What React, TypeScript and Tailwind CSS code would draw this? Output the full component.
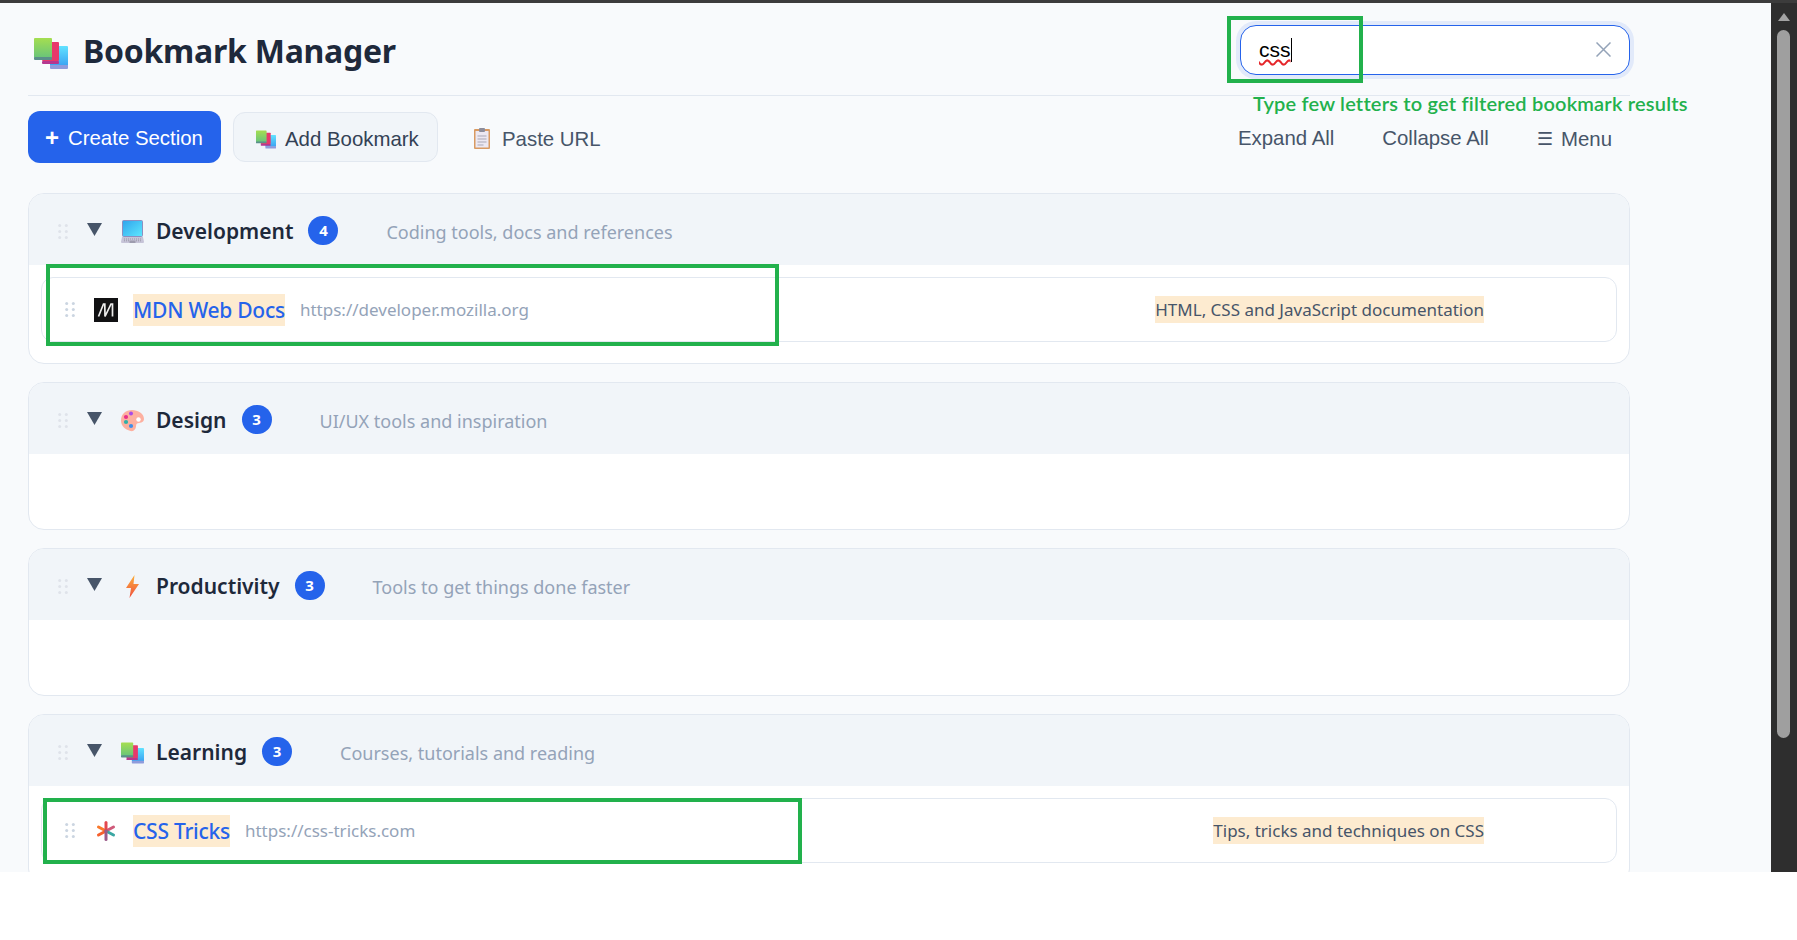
type Section = {
  title: string
  count: number
  description: string
  icon: 'laptop' | 'palette' | 'bolt' | 'books'
  items?: { name: string; url: string; note: string; icon: 'mdn' | 'css' }[]
}

const SECTIONS: Section[] = [
  {
    title: 'Development',
    count: 4,
    description: 'Coding tools, docs and references',
    icon: 'laptop',
    items: [
      { name: 'MDN Web Docs', url: 'https://developer.mozilla.org', note: 'HTML, CSS and JavaScript documentation', icon: 'mdn' },
    ],
  },
  { title: 'Design', count: 3, description: 'UI/UX tools and inspiration', icon: 'palette' },
  { title: 'Productivity', count: 3, description: 'Tools to get things done faster', icon: 'bolt' },
  {
    title: 'Learning',
    count: 3,
    description: 'Courses, tutorials and reading',
    icon: 'books',
    items: [
      { name: 'CSS Tricks', url: 'https://css-tricks.com', note: 'Tips, tricks and techniques on CSS', icon: 'css' },
    ],
  },
]

function BooksIcon({ className, id }: { className: string; id: string }) {
  return (
    <svg viewBox="0 0 34 31" className={className} aria-hidden="true">
      <defs>
        <linearGradient id={`${id}-g`} x1="0" y1="0" x2="0" y2="1">
          <stop offset="0" stopColor="#a5de50" />
          <stop offset="1" stopColor="#68c47a" />
        </linearGradient>
        <linearGradient id={`${id}-b`} x1="0" y1="0" x2="0" y2="1">
          <stop offset="0" stopColor="#62e2ff" />
          <stop offset="1" stopColor="#3aa2f2" />
        </linearGradient>
      </defs>
      <rect x="16" y="8" width="18" height="20" rx="1" fill={`url(#${id}-b)`} />
      <rect x="16" y="27" width="18" height="4" rx="1" fill="#8f9bdc" />
      <rect x="8" y="4" width="17" height="19" rx="1" fill="#e8386b" />
      <rect x="8" y="23" width="17" height="3" rx="1" fill="#b5378f" />
      <rect x="0" y="0" width="18" height="20" rx="1" fill={`url(#${id}-g)`} />
      <rect x="0" y="19" width="18" height="3" rx="1" fill="#5a8f8a" />
    </svg>
  )
}

function SectionIcon({ icon, id }: { icon: Section['icon']; id: string }) {
  if (icon === 'books') return <BooksIcon className="w-[23px] h-[22px]" id={id} />
  if (icon === 'laptop') {
    return (
      <svg viewBox="0 0 23 23" className="w-[23px] h-[23px]" aria-hidden="true">
        <defs>
          <linearGradient id={`${id}-s`} x1="0" y1="0" x2="1" y2="1">
            <stop offset="0" stopColor="#2fa4ec" />
            <stop offset="1" stopColor="#5fe8ff" />
          </linearGradient>
        </defs>
        <rect x="1.500" y="0.500" width="20" height="16" rx="1" fill={`url(#${id}-s)`} stroke="#8e8fc0" />
        <path d="M1 17h21l1 5a1 1 0 0 1-1 1H1a1 1 0 0 1-1-1z" fill="#c6c4d8" />
        <path d="M3 19h17M3 20.800h5M15 20.800h5" stroke="#94939f" strokeWidth="0.900" strokeDasharray="1 1" />
        <rect x="8.500" y="20.500" width="6" height="2.500" fill="#9d9cae" />
      </svg>
    )
  }
  if (icon === 'palette') {
    return (
      <svg viewBox="0 0 23 23" className="w-[23px] h-[23px]" aria-hidden="true">
        <path d="M11 1c6 0 12 3.500 12 9 0 4-5 3.500-7 4.500-1.500 1-.5 3-1.500 5-1 2-3 3-5 2.500C4 20.500 0 17 0 11.500 0 5 5 1 11 1z" fill="#fdb0a0" />
        <circle cx="17.500" cy="10.500" r="2.200" fill="#fff" />
        <circle cx="10" cy="4.500" r="2" fill="#a84be8" />
        <circle cx="5" cy="8" r="2.100" fill="#e8308a" />
        <circle cx="5" cy="13" r="2.100" fill="#2fb0a8" />
        <circle cx="10" cy="17" r="2.100" fill="#3f8ee8" />
      </svg>
    )
  }
  return (
    <svg viewBox="0 0 23 23" className="w-[23px] h-[23px]" aria-hidden="true">
      <defs>
        <linearGradient id={`${id}-f`} x1="0" y1="0" x2="0" y2="1">
          <stop offset="0" stopColor="#fbb03b" />
          <stop offset="1" stopColor="#ef4f3f" />
        </linearGradient>
      </defs>
      <path d="M13.500 0 5 13h5l-1.500 10L18 9h-5.500z" fill={`url(#${id}-f)`} />
    </svg>
  )
}

function Grip({ className }: { className: string }) {
  return (
    <svg viewBox="0 0 10 15" className={`w-[10px] h-[15px] shrink-0 ${className}`} fill="currentColor" aria-hidden="true">
      {[1.5, 7.5, 13.5].map((y) => (
        <g key={y}>
          <circle cx="1.700" cy={y} r="1.500" />
          <circle cx="8.300" cy={y} r="1.500" />
        </g>
      ))}
    </svg>
  )
}

function ItemIcon({ icon }: { icon: 'mdn' | 'css' }) {
  if (icon === 'mdn') {
    return (
      <svg viewBox="0 0 24 24" className="w-[24px] h-[24px] shrink-0" aria-hidden="true">
        <rect width="24" height="24" fill="#111113" />
        <path d="M4.500 18.500 9.500 6h1.300L11 18.500 17 6h1.500v12.500" stroke="#ececec" strokeWidth="1.700" fill="none" />
      </svg>
    )
  }
  return (
    <svg viewBox="0 0 24 24" className="w-[24px] h-[24px] shrink-0" strokeWidth="3" strokeLinecap="round" aria-hidden="true">
      <path d="M12 12 4.500 8" stroke="#f9792c" />
      <path d="M12 12 4.500 16" stroke="#f6602d" />
      <path d="M12 12 19.500 8" stroke="#cf5a7a" />
      <path d="M12 12 19.500 16" stroke="#3ba7a3" />
      <path d="M12 12V3.500" stroke="#e3484f" />
      <path d="M12 12v8.500" stroke="#9a5a8a" />
    </svg>
  )
}

function BookmarkSection({ section }: { section: Section }) {
  return (
    <section className="border border-[#e2e8f0] rounded-2xl bg-white overflow-hidden">
      <header className="h-[71px] bg-[#f1f5f9] flex items-center pl-[29px] pt-[4px] font-['Noto_Sans',sans-serif]">
        <Grip className="text-[#dfe3ea] mb-[1px]" />
        <svg viewBox="0 0 15 13" className="w-[15px] h-[13px] ml-[19px] mb-[5px] shrink-0" aria-hidden="true">
          <path d="M0 0h15L7.500 13z" fill="#475569" />
        </svg>
        <span className="ml-[19px] w-[23px] shrink-0 flex">
          <SectionIcon icon={section.icon} id={section.title} />
        </span>
        <h2 className="ml-[12px] text-[21px] leading-none font-semibold text-[#1e293b]">{section.title}</h2>
        <span className="ml-[15px] mb-[3px] w-[30px] h-[29px] rounded-full bg-[#2563eb] text-white text-[15px] font-bold flex items-center justify-center">
          {section.count}
        </span>
        <p className="ml-[48px] mt-[2px] text-[18px] text-[#94a3b8]">{section.description}</p>
      </header>
      <div className="px-3 pt-3 pb-[21px] min-h-[75px] flex flex-col gap-3">
        {section.items?.map((item) => (
          <div
            key={item.name}
            className="h-[65px] border border-[#e2e8f0] rounded-xl flex items-center pl-[23px] pr-[132px] font-['Noto_Sans',sans-serif]"
          >
            <Grip className="text-[#cbd5e1]" />
            <span className="ml-[19px] flex">
              <ItemIcon icon={item.icon} />
            </span>
            <a className="ml-[15px] h-[32px] pt-[3px] flex items-center bg-[#fdebd0] text-[#2563eb] text-[21px] font-medium tracking-[-0.25px] whitespace-nowrap">
              {item.name}
            </a>
            <span className="ml-[15px] text-[17px] text-[#94a3b8]">{item.url}</span>
            <span className="ml-auto h-[27px] flex items-center bg-[#fdebd0] text-[17px] text-[#475569] whitespace-nowrap">
              {item.note}
            </span>
          </div>
        ))}
      </div>
    </section>
  )
}

export default function App() {
  return (
    <div className="h-[940px] bg-white overflow-hidden">
      <div className="h-[872px] flex overflow-hidden">
        <main className="relative flex-1 min-w-0 bg-[#f8fafc] border-t-[3px] border-[#3c3c3c] overflow-hidden pl-[28px] pr-[141px]">
          <div className="h-[93px] border-b border-[#e2e8f0] flex items-center justify-between pb-[2px]">
            <div className="flex items-center gap-[15px] mt-[6px]">
              <BooksIcon className="w-[34px] h-[31px] mt-[5px] ml-[6px]" id="title" />
              <h1 className="text-[32px] font-bold text-[#1e293b] tracking-[-0.25px] font-['Noto_Sans',sans-serif]">Bookmark Manager</h1>
            </div>
            <div className="w-[390px] h-[50px] mt-[3px] rounded-2xl bg-white border-[1.5px] border-[#2563eb] ring-4 ring-[#2563eb]/10 flex items-center pl-[18px] pr-[18px] font-['Liberation_Sans',sans-serif]">
              <span className="text-[21px] text-black underline decoration-wavy decoration-[#e5262a] underline-offset-2">css</span>
              <span className="w-px h-[24px] bg-black" />
              <svg viewBox="0 0 15 15" className="ml-auto w-[15px] h-[15px] text-[#94a3b8]" fill="none" stroke="currentColor" strokeWidth="1.500" aria-hidden="true">
                <path d="M0.500 0.500l14 14M14.500 0.500l-14 14" />
              </svg>
            </div>
          </div>

          <div className="mt-[15px] h-[52px] flex items-center font-['Liberation_Sans',sans-serif]">
            <button className="h-[52px] w-[193px] rounded-xl bg-[#2563eb] text-white text-[20.4px] flex items-center pl-[17px] gap-[9px] pt-[2px]">
              <span className="font-bold text-[24px] leading-none">+</span>
              <span>Create Section</span>
            </button>
            <button className="ml-[12px] h-[50px] w-[205px] rounded-xl bg-[#f1f5f9] border border-[#e2e8f0] text-[#334155] text-[20.4px] flex items-center pl-[22px] pt-[4px] gap-[9px]">
              <BooksIcon className="w-[20px] h-[19px]" id="add" />
              <span>Add Bookmark</span>
            </button>
            <button className="ml-[36px] pt-[4px] text-[#475569] text-[20.4px] flex items-center gap-[12px]">
              <svg viewBox="0 0 16 21" className="w-[16px] h-[21px]" aria-hidden="true">
                <rect x="0" y="1" width="16" height="20" rx="1" fill="#d99a62" />
                <rect x="1.500" y="3" width="13" height="16.500" fill="#ece8f2" />
                <rect x="5" y="0" width="6" height="4" rx="1" fill="#8d8d9b" />
                <path d="M3.500 8h9M3.500 11h9M3.500 14h9M3.500 17h6" stroke="#a9a7b5" strokeWidth="1" />
              </svg>
              <span>Paste URL</span>
            </button>
            <div className="ml-auto text-[#475569] text-[20.4px] flex items-center pr-[18px]">
              <button className="pt-[2px]">Expand All</button>
              <button className="ml-[48px] pt-[2px]">Collapse All</button>
              <button className="ml-[48px] pt-[4px] flex items-center gap-[8px]">
                <span className="font-['DejaVu_Sans',sans-serif] text-[18px]">☰</span>
                <span>Menu</span>
              </button>
            </div>
          </div>

          <div className="mt-[30px] flex flex-col gap-[18px]">
            {SECTIONS.map((section) => (
              <BookmarkSection key={section.title} section={section} />
            ))}
          </div>

          {/* green annotations drawn over the screenshot */}
          <div className="absolute left-[1227px] top-[13px] w-[136px] h-[67px] border-4 border-[#22b14c]" />
          <p className="absolute left-[1253px] top-[85px] text-[20px] tracking-[0.2px] font-['Lato',sans-serif] font-semibold text-[#22b14c] whitespace-nowrap">
            Type few letters to get filtered bookmark results
          </p>
          <div className="absolute left-[46px] top-[261px] w-[733px] h-[82px] border-4 border-[#22b14c]" />
          <div className="absolute left-[43px] top-[795px] w-[759px] h-[66px] border-4 border-[#22b14c]" />
        </main>
        <div className="w-[26px] shrink-0 bg-[#2e2e2e] border-t-[3px] border-[#3c3c3c] flex flex-col items-center pr-[1px]">
          <svg viewBox="0 0 12 8" className="w-[12px] h-[8px] mt-[10px]" aria-hidden="true">
            <path d="M6 0l6 8H0z" fill="#a3a3a3" />
          </svg>
          <div className="mt-[9px] w-[13px] h-[708px] rounded-full bg-[#9f9f9f]" />
        </div>
      </div>
    </div>
  )
}
